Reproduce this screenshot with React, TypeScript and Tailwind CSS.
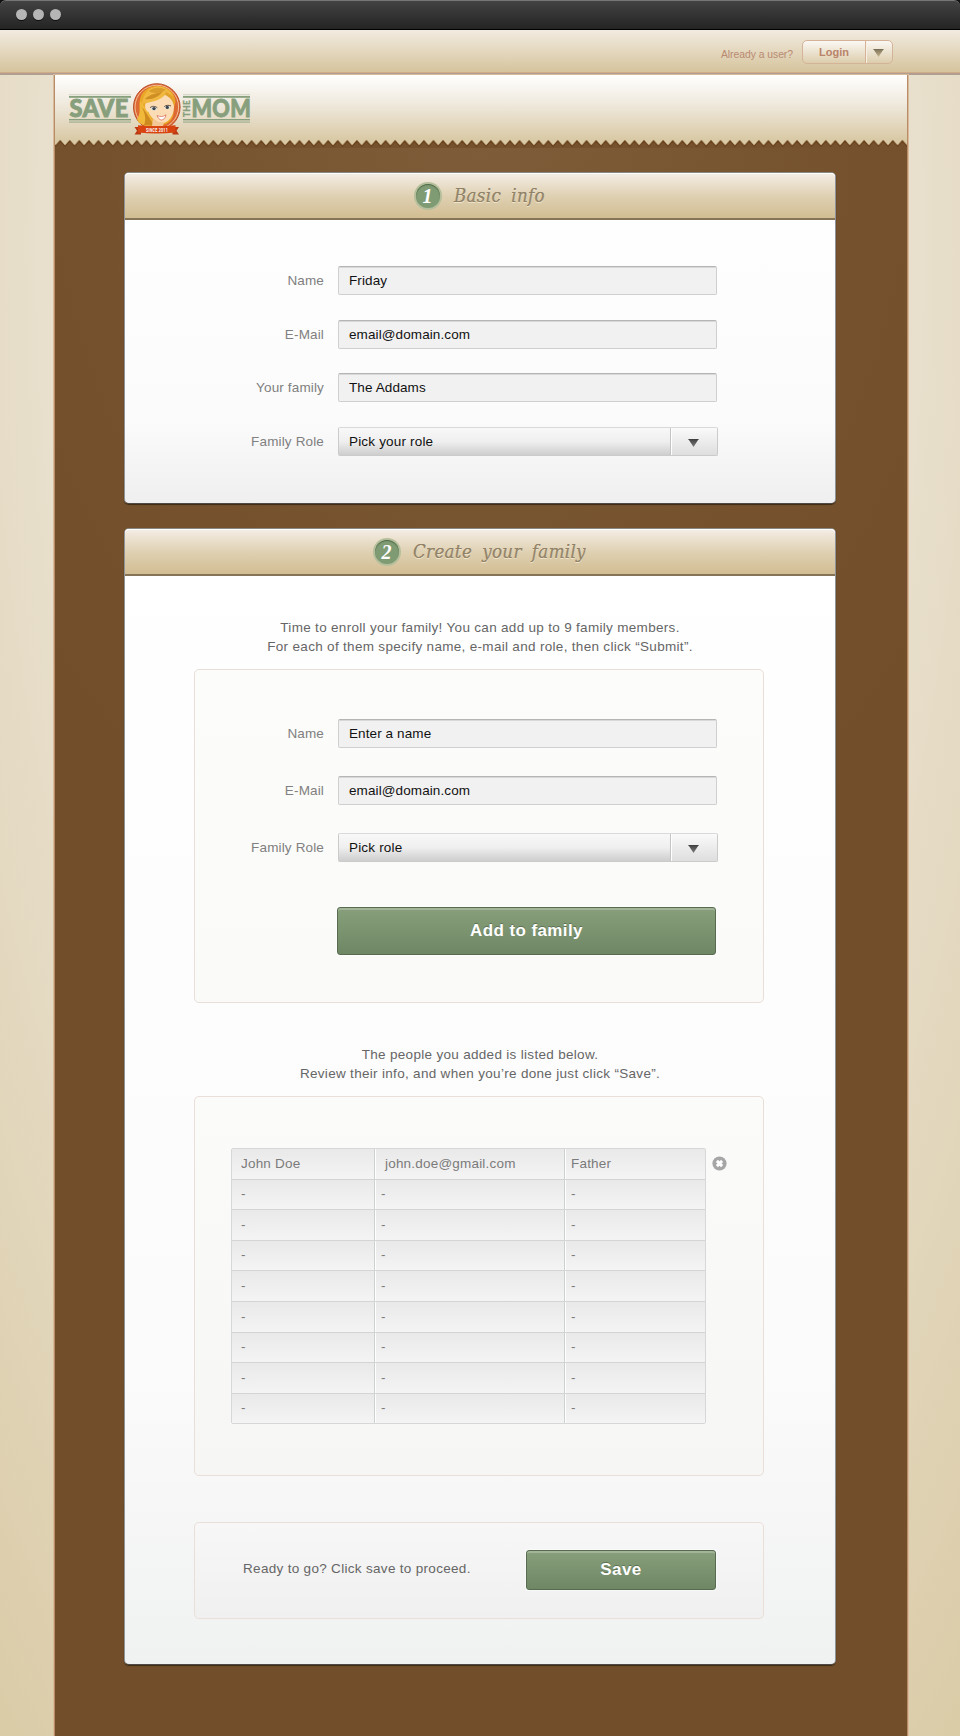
import React from "react";

const sans = "font-['Liberation_Sans',Arial,sans-serif]";

function Caret({ className, id, from, to }: { className?: string; id: string; from: string; to: string }) {
  return (
    <svg className={className} width="11" height="8" viewBox="0 0 11 8">
      <defs>
        <linearGradient id={id} x1="0" y1="0" x2="0" y2="1">
          <stop offset="0" stopColor={from} />
          <stop offset="1" stopColor={to} />
        </linearGradient>
      </defs>
      <path d="M0.3 0H10.7L5.5 8Z" fill={`url(#${id})`} />
      <path d="M0.3 0H10.7L10 1H1Z" fill={from} />
    </svg>
  );
}

function Logo() {
  return (
    <svg className="ml-[13px] block" width="194" height="54" viewBox="68 82 194 54">
      <g fill="#879f7c">
        <rect x="69" y="96" width="62" height="1.8" />
        <rect x="69" y="94.4" width="62" height="0.8" opacity="0.45" />
        <rect x="69" y="119" width="62" height="1.4" />
        <rect x="69" y="121.3" width="62" height="1.6" opacity="0.55" />
        <rect x="183" y="96" width="67" height="1.8" />
        <rect x="183" y="94.4" width="67" height="0.8" opacity="0.45" />
        <rect x="183" y="119" width="67" height="1.4" />
        <rect x="183" y="121.3" width="67" height="1.6" opacity="0.55" />
        <g fontFamily="Lato, sans-serif" fontWeight="900" stroke="#879f7c" strokeWidth="0.9">
          <text x="69.500" y="117" fontSize="24" textLength="59" lengthAdjust="spacingAndGlyphs">SAVE</text>
          <text x="191.500" y="117" fontSize="24" textLength="59.500" lengthAdjust="spacingAndGlyphs">MOM</text>
          <text transform="translate(189.8 117) rotate(-90)" x="0" y="0" fontSize="8.8" strokeWidth="0.3" textLength="17" lengthAdjust="spacingAndGlyphs">THE</text>
        </g>
      </g>
      <circle cx="156.8" cy="107" r="23.3" fill="#e2622c" stroke="#b9512c" strokeWidth="1" />
      <circle cx="156.8" cy="107" r="21.8" fill="#dd6a32" stroke="#f3c9a4" strokeWidth="0.9" />
      <path d="M138 122C142 116 139 109 139.500 102C140.500 91 149 86 157 86C167 86 175 92 175.500 102L173 109C175 116 171 123 163 125L146 126Z" fill="#eaa727" />
      <path d="M137 119C141 114 139 107 140.500 101L148 112L155 126H147C142 125 139 123 137 119Z" fill="#f1b93a" />
      <path d="M144 125C147 118 144 112 142 107C147 113 149 118 155 126Z" fill="#cf8a1f" />
      <path d="M146 103C153 101 161 98 166 92C171 96 174 101 174 107C174 115 169 123 162 123C156 123 151 118 148.500 112C145.500 111 144 105 146 103Z" fill="#fbdcb4" />
      <path d="M153 118L152 126H163L164 122C159 123 156 121 153 118Z" fill="#f4c797" />
      <path d="M142 104C143 94 149 87 157 86.500C164 86 170 90 173 96C170 94 167 94 165 95C159 101 151 102 145 103Z" fill="#f0b840" />
      <path d="M145 99C152 100 159 97 163 91C157 94 151 93 145 99Z" fill="#cf8f25" />
      <path d="M149 91C154 87 161 87 166 90C161 92 155 95 149 91Z" fill="#d99c2c" />
      <path d="M166 92C171 94 175 100 174.500 107C173 101 170 97 165 95Z" fill="#e0a22c" />
      <ellipse cx="154" cy="108.600" rx="3.100" ry="1.900" fill="#dfe3e0" />
      <ellipse cx="167.300" cy="107.400" rx="2.800" ry="1.800" fill="#dfe3e0" />
      <circle cx="154" cy="108.600" r="1.700" fill="#3a444c" />
      <circle cx="167.300" cy="107.400" r="1.600" fill="#3a444c" />
      <path d="M150 107.800C152 105.800 155 106 157.300 107.800M164.300 106.600C166 105 169 105 171 106" fill="none" stroke="#4a3b33" strokeWidth="0.900" />
      <path d="M157 115.500C160 117 163 117 166 114.800C165.500 118 163.500 120 161.500 120C159.500 120 158 118 157 115.500Z" fill="#fff" stroke="#d9624a" strokeWidth="0.700" />
      <path d="M134.500 127H141V134.500H134.500L137 130.700Z" fill="#b93a12" />
      <path d="M179 127H172.500V134.500H179L176.500 130.700Z" fill="#b93a12" />
      <path d="M138 125.300C150 126.600 163 126.600 175.500 125.300V132.500C163 133.800 150 133.800 138 132.500Z" fill="#d8430f" />
      <text x="146" y="131.800" fontFamily="Roboto, sans-serif" fontWeight="700" fontSize="6" fill="#fff" textLength="22" lengthAdjust="spacingAndGlyphs">SINCE 2011</text>
    </svg>
  );
}

function Zigzag() {
  return (
    <svg className="block" width="852" height="8" viewBox="55 140 852 8">
      <defs>
        <pattern id="teeth" x="65" y="140" width="9.57" height="8" patternUnits="userSpaceOnUse">
          <path d="M-1 8V7.300L0 6.500L4.785 1.200L9.570 6.500L11 8Z" fill="#75512d" />
          <path d="M-1 5.200L0 6.300L4.785 1L9.570 6.300L10.500 5.200" fill="none" stroke="#6a431d" strokeWidth="1.500" />
        </pattern>
      </defs>
      <rect x="55" y="140" width="852" height="8" fill="#d9c9a5" />
      <rect x="55" y="140" width="852" height="8" fill="url(#teeth)" />
    </svg>
  );
}

function Heading({ n, title, pad }: { n: string; title: string; pad: string }) {
  return (
    <div className="h-[47px] rounded-t-[4px] border-b-2 border-b-[#857457] bg-linear-to-b from-[#f5eee6] via-[#dfd1b3] to-[#d2bd92] shadow-[inset_0_1px_0_#fff]">
      <div className={`flex items-center pt-[11px] ${pad}`}>
        <span className="flex size-[24px] shrink-0 items-center justify-center rounded-full bg-[#7f9b74] pr-px font-['Liberation_Serif',serif] text-[20px] leading-none font-bold tracking-normal text-white italic shadow-[0_0_0_2px_#b5bf9b,inset_0_1px_1px_#4f6a48]">
          {n}
        </span>
        <h2 className="ml-[14px] font-['DejaVu_Serif_Condensed','DejaVu_Serif',serif] text-[18.5px] leading-[24px] tracking-[0.35px] [word-spacing:4.5px] whitespace-nowrap text-[#928368] italic [font-stretch:condensed] [text-shadow:0_1px_0_#efe4cc,0_-0.5px_0_#7d7058]">
          {title}
        </h2>
      </div>
    </div>
  );
}

function Row({ label, children }: { label: string; children: React.ReactNode }) {
  return (
    <div className="flex items-center tracking-[0.15px]">
      <span className="w-[199px] shrink-0 pt-[2px] text-right text-[#808080]">{label}</span>
      <div className="ml-[14px] shrink-0">{children}</div>
    </div>
  );
}

function Field({ value }: { value: string }) {
  return (
    <div className="flex h-[29px] w-[379px] items-center rounded-[2px] border border-[#cfcfcf] border-t-[#b5b5b5] bg-[#f1f1f1] pt-[2px] pl-[10px] tracking-[0.1px] text-[#111] shadow-[inset_0_1px_0_#d8d8d8]">
      {value}
    </div>
  );
}

function Picker({ value, id }: { value: string; id: string }) {
  return (
    <div className="flex h-[29px] w-[380px] rounded-[2px] border border-[#cbcbcb] border-t-[#d9d9d9] tracking-[0.18px] text-[#111]">
      <div className="flex w-[332px] items-center border-r border-[#c4c4c4] bg-linear-to-b from-[#f8f8f8] via-[#efefef] to-[#cecece] pt-[2px] pl-[10px]">{value}</div>
      <div className="flex flex-1 items-center justify-center border-l border-white bg-linear-to-b from-[#fafafa] to-[#dedede] pt-[3px] pr-[3px]">
        <Caret id={id} from="#404040" to="#7d7d7d" />
      </div>
    </div>
  );
}

function GreenButton({ label, className }: { label: string; className: string }) {
  return (
    <button
      className={`flex items-center justify-center rounded-[3px] border border-[#566b50] bg-linear-to-b from-[#879f7a] to-[#6f8765] text-[17px] font-bold tracking-[0.4px] text-white shadow-[inset_0_2px_0_#a3b598,0_0_0_1px_#ffffff80] [text-shadow:0_-1px_0_#5c7254] ${className}`}
    >
      {label}
    </button>
  );
}

const rows = [
  ["John Doe", "john.doe@gmail.com", "Father"],
  ...Array.from({ length: 8 }, () => ["-", "-", "-"]),
];

function People() {
  return (
    <div className="w-[475px] rounded-[2px] border border-[#d6d8d8] tracking-[0.2px] text-[#7b7b7b]">
      {rows.map((r, i) => (
        <div
          key={i}
          className="flex h-[30.6px] items-center border-b border-[#d3d5d5] bg-linear-to-b from-[#e9e9e9] to-[#f4f4f4] last:h-[29.6px] last:border-b-0"
        >
          <span className="flex h-full w-[143px] items-center border-r border-[#cdd0d0] pl-[9px]">{r[0]}</span>
          <span className={`flex h-full w-[190px] items-center border-r border-l border-r-[#cdd0d0] border-l-white ${i === 0 ? "pl-[9px]" : "pl-[5px]"}`}>{r[1]}</span>
          <span className="flex h-full flex-1 items-center border-l border-white pl-[5px]">{r[2]}</span>
        </div>
      ))}
    </div>
  );
}

const card = "ml-[69px] w-[712px] rounded-[5px] border border-t-[#8b8781] border-r-[#8f949a] border-b-[#4f4a45] border-l-[#8f949a] shadow-[0_1px_1px_#3d2a15]";
const panel = "ml-[69px] w-[570px] rounded-[5px] border border-[#eaded8]";

export default function App() {
  return (
    <div className={`flex h-[1736px] w-[960px] flex-col overflow-hidden bg-[#111] text-[13.5px] tracking-[0.31px] ${sans}`}>
      <div className="flex h-[30px] shrink-0 items-center gap-[6px] rounded-t-[6px] border-t border-b border-t-[#777] border-b-black bg-linear-to-b from-[#434343] to-[#242424] pb-px pl-[16px]">
        <i className="size-[11px] rounded-full bg-[#b5b5b5] shadow-[0_1px_0_#111]" />
        <i className="size-[11px] rounded-full bg-[#b5b5b5] shadow-[0_1px_0_#111]" />
        <i className="size-[11px] rounded-full bg-[#b5b5b5] shadow-[0_1px_0_#111]" />
      </div>

      <div className="flex h-[45px] shrink-0 items-start justify-end border-b-2 border-[#b09f90] bg-linear-to-b from-[#f2ebe0] to-[#d5c39b] pr-[67px] shadow-[inset_0_-1px_0_#d0ac88]">
        <span className="mt-[17px] mr-[9px] text-[10.4px] leading-[15px] tracking-[-0.05px] text-[#b98a72]">Already a user?</span>
        <div className="mt-[10px] flex h-[24px] w-[91px] overflow-hidden rounded-[5px] border border-[#d5b399] bg-linear-to-b from-[#fbf8f4] to-[#dccdac]">
          <span className="flex w-[63px] items-center justify-center border-r border-[#d5b399] text-[11px] font-bold tracking-normal text-[#b98368]">Login</span>
          <span className="flex flex-1 items-center justify-center border-l border-[#f6efe3] pt-px pr-[3px]">
            <Caret id="caret-login" from="#7a7058" to="#c9b78d" />
          </span>
        </div>
      </div>

      <div className="flex flex-1 justify-center bg-[radial-gradient(ellipse_800px_2000px_at_50%_10%,#ebe2d0_0%,#e8dfcc_55%,#dbcca8_95%)]">
        <main className="ml-[2px] w-[854px] border-x border-[#b88c66] bg-[radial-gradient(ellipse_600px_900px_at_50%_0%,#7f5d3a_0%,#75522d_65%,#724f2a_100%)] shadow-[0_0_0_1px_#d9bb9c]">
          <header className="h-[65px] bg-linear-to-b from-white via-[#efe9dd] via-45% to-[#d9c9a5] pt-[7px]">
            <Logo />
          </header>
          <Zigzag />

          <section className={`${card} mt-[24px] h-[332px] bg-linear-to-b from-white via-[#fbfbfb] via-75% to-[#efeff0]`}>
            <Heading n="1" title="Basic info" pad="pl-[291px]" />
            <div className="flex flex-col pt-[46px]">
              <Row label="Name"><Field value="Friday" /></Row>
              <div className="h-[25px]" />
              <Row label="E-Mail"><Field value="email@domain.com" /></Row>
              <div className="h-[24px]" />
              <Row label="Your family"><Field value="The Addams" /></Row>
              <div className="h-[25px]" />
              <Row label="Family Role"><Picker id="caret-a" value="Pick your role" /></Row>
            </div>
          </section>

          <section className={`${card} mt-[24px] h-[1137px] bg-linear-to-b from-white via-[#fbfbfb] via-75% to-[#f0f1f1]`}>
            <Heading n="2" title="Create your family" pad="pl-[250px]" />
            <p className="mt-[42px] text-center leading-[19px] text-[#666]">
              Time to enroll your family! You can add up to 9 family members.
              <br />
              For each of them specify name, e-mail and role, then click “Submit”.
            </p>
            <div className={`${panel} mt-[13px] h-[334px] bg-linear-to-b from-[#fcfcfa] to-[#fafaf8]`}>
              <div className="-ml-[70px] flex flex-col gap-[28px] pt-[49px]">
                <Row label="Name"><Field value="Enter a name" /></Row>
                <Row label="E-Mail"><Field value="email@domain.com" /></Row>
                <Row label="Family Role"><Picker id="caret-b" value="Pick role" /></Row>
              </div>
              <GreenButton label="Add to family" className="mt-[45px] ml-[142px] h-[48px] w-[379px]" />
            </div>
            <p className="mt-[42px] mb-[13px] text-center leading-[19px] text-[#666]">
              The people you added is listed below.
              <br />
              Review their info, and when you’re done just click “Save”.
            </p>
            <div className={`${panel} flex h-[380px] items-start bg-linear-to-b from-[#fbfbf9] to-[#f6f6f5] pt-[51px] pl-[36px]`}>
              <People />
              <svg className="mt-[8px] ml-[6px]" width="15" height="15" viewBox="0 0 15 15">
                <circle cx="7.500" cy="7.500" r="7.100" fill="#a6a6a6" />
                <path d="M4.900 4.900L10.100 10.100M10.100 4.900L4.900 10.100" stroke="#fff" strokeWidth="2.900" />
              </svg>
            </div>
            <div className={`${panel} mt-[46px] flex h-[97px] items-start bg-linear-to-b from-[#f7f7f7] to-[#f0f0f0] pl-[48px]`}>
              <span className="mt-[36px] w-[283px] leading-[19px] text-[#666]">Ready to go? Click save to proceed.</span>
              <GreenButton label="Save" className="mt-[27px] h-[40px] w-[190px]" />
            </div>
          </section>
        </main>
      </div>
    </div>
  );
}
